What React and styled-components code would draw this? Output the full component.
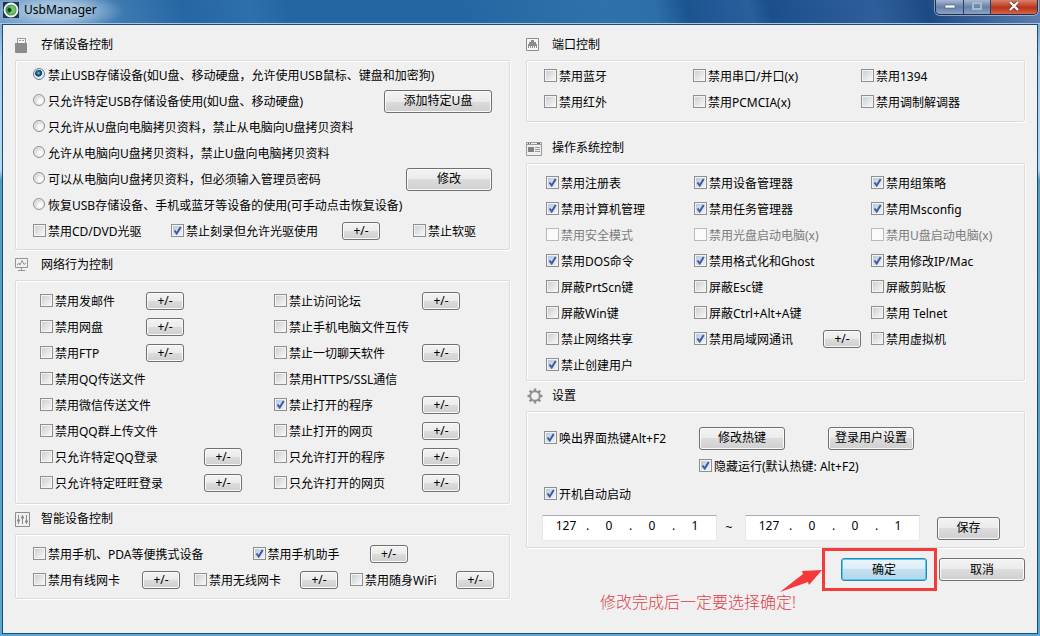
import React from 'react';
import styled, { createGlobalStyle, css } from 'styled-components';

const Global = createGlobalStyle`
  *, *::before, *::after { box-sizing: border-box; }
  body {
    margin: 0;
    font-family: "Noto Sans", "Noto Sans CJK SC", sans-serif;
    font-size: 12px;
    line-height: 16px;
    color: #000;
  }
  button, input { font: inherit; color: inherit; }
`;

const Window = styled.div`
  min-height: 100vh;
  display: flex;
  flex-direction: column;
  background: linear-gradient(180deg, #5f93c4 0, #a9cfe8 60px, #b4d8ee 170px, #4f9fc4 180px, #5aa7cf 100%);
`;

const TitleBar = styled.header`
  height: 24px;
  display: flex;
  align-items: flex-start;
  gap: 5px;
  padding: 0 2px 0 3px;
  border-bottom: 1px solid #a8c4de;
  background:
    radial-gradient(ellipse 68px 20px at 56px 11px, rgba(175, 203, 228, 0.85) 40%, rgba(175, 203, 228, 0) 100%),
    linear-gradient(75deg, #6f9cc6 0, #3d79b0 12%, #2566a3 18%, #2e70ab 24%, #2267a2 28%, #2367a2 44%, #2f72ab 58%, #2d6fa8 63%, #1c5490 66%, #2a5f9c 72%, #1b4f8c 74%, #2f5f9a 84%, #1d4a85 89%, #5f7fae 100%);
`;

const AppIcon = styled.svg`
  width: 16px;
  height: 16px;
  margin-top: 2px;
`;

const WindowTitle = styled.h1`
  margin: 2px 0 0;
  flex: 1;
  font-size: 12px;
  line-height: 16px;
  font-weight: 400;
`;

const Caption = styled.div`
  display: flex;
  height: 15px;
  border: 1px solid #1f2f4c;
  border-top: 0;
  border-radius: 0 0 5px 5px;
  overflow: hidden;
  box-shadow: 0 0 0 1px rgba(200, 215, 235, 0.6);
`;

const CaptionButton = styled.button`
  width: ${p => (p.$close ? 47 : 27)}px;
  padding: 0 0 3px;
  border: 0;
  border-left: ${p => (p.$first ? '0' : '1px solid #2c3f60')};
  background: ${p => (p.$close
    ? 'linear-gradient(#d9806c, #b93318 55%, #d6664b)'
    : 'linear-gradient(#a8b8d2, #6680a8 50%, #8ba2c4)')};
  display: flex;
  align-items: center;
  justify-content: center;
`;

const Body = styled.main`
  flex: 1;
  margin: 0 2px 2px;
  border: 1px solid #1d4a78;
  background: #f0f0f0;
  padding: 5px 12px 7px;
  display: grid;
  grid-template-columns: 495fr 499fr;
  column-gap: 16px;
  align-items: start;
`;

const Section = styled.section`
  margin-top: ${p => p.$space || 0}px;
`;

const SectionHead = styled.h2`
  margin: 0;
  height: 30px;
  display: flex;
  align-items: center;
  gap: 9px;
  font-size: 12px;
  line-height: 16px;
  font-weight: 400;
  svg { width: 17px; height: 17px; }
`;

const Panel = styled.div`
  border: 1px solid #d9dbdc;
  border-radius: 2px;
  box-shadow: inset 1px 1px 0 #fff, 1px 1px 0 #fff;
  padding: ${p => p.$pad};
`;

const Row = styled.div`
  display: flex;
  align-items: center;
  justify-content: ${p => (p.$spread ? 'space-between' : 'flex-start')};
  height: 26px;
`;

const Grid = styled.div`
  display: grid;
  grid-template-columns: ${p => p.$columns};
  grid-auto-rows: ${p => p.$height || 26}px;
  align-items: center;
  padding-left: ${p => p.$indent || 0}px;
`;

const Cell = styled.div`
  display: flex;
  align-items: center;
  grid-column: ${p => p.$column || 'auto'};
`;

const Label = styled.label`
  display: flex;
  align-items: center;
  gap: 2px;
  width: ${p => (p.$width ? `${p.$width}px` : 'auto')};
  padding-top: 1px;
  white-space: nowrap;
  color: ${p => (p.$disabled ? '#7c7c7c' : '#000')};
`;

const CheckInput = styled.input`
  appearance: none;
  flex: none;
  width: 13px;
  height: 13px;
  margin: 0 0 3px;
  border: 1px solid #8e8f8f;
  background: linear-gradient(135deg, #cdd0d3, #f6f6f6) content-box, #f4f4f4;
  padding: 1px;
  &:checked {
    background:
      url("data:image/svg+xml,%3Csvg xmlns='http://www.w3.org/2000/svg' viewBox='0 0 11 11'%3E%3Cpath d='M2.5 5.5L4.7 8.5L8.7 2' fill='none' stroke='%2342599c' stroke-width='2'/%3E%3C/svg%3E") center / 11px 11px no-repeat border-box,
      linear-gradient(135deg, #b5c9e0, #eef4fa) content-box,
      #f4f4f4;
  }
  &:disabled {
    border-color: #b9b9b9;
    background: #fafafa;
  }
`;

const RadioInput = styled.input`
  appearance: none;
  flex: none;
  width: 12px;
  height: 12px;
  margin: 0 1px 3px 0;
  border: 1px solid #8f9092;
  border-radius: 50%;
  background: radial-gradient(circle at 65% 65%, #fbfbfb 20%, #c8cbce 75%);
  box-shadow: inset 0 0 0 1px #f0f0f0;
  &:checked {
    border-color: #5c7f9d;
    background: radial-gradient(circle at 45% 40%, #6fc2e8 0, #14486e 30%, #123d60 40%, #dce7ef 48%);
  }
`;

const buttonFace = css`
  border: 1px solid #707070;
  border-radius: 3px;
  background: linear-gradient(#f3f3f3 0, #ebebeb 50%, #dcdcdc 50%, #cfcfcf 100%);
  box-shadow: inset 0 0 0 1px #fafafa;
`;

const Button = styled.button`
  ${buttonFace}
  width: ${p => p.$width || 86}px;
  height: 23px;
  padding: 0;
  flex: none;
  white-space: nowrap;
  ${p => p.$primary && css`
    border-color: #3c7fb1;
    background: linear-gradient(#eaf4fa 0, #dbedf8 50%, #c5e0f1 50%, #b5d6ea 100%);
    box-shadow: inset 0 0 0 1px #40d0f4;
  `}
`;

const MiniButton = styled.button`
  ${buttonFace}
  width: 38px;
  height: 18px;
  padding: 0;
  line-height: 16px;
  flex: none;
`;

const Address = styled.fieldset`
  flex: none;
  width: 175px;
  height: 26px;
  margin: 0;
  padding: 0 0 4px 4px;
  border: 1px solid #e3e9ef;
  border-top-color: #abadb3;
  background: #fff;
  display: flex;
  align-items: center;
`;

const Octet = styled.input`
  width: 38px;
  padding: 0;
  border: 0;
  background: none;
  text-align: center;
`;

const Dot = styled.span`
  width: 5px;
  text-align: center;
`;

const IpRow = styled.div`
  display: flex;
  align-items: center;
  margin-top: 7px;
`;

const Tilde = styled.span`
  width: 28px;
  padding-right: 4px;
  text-align: center;
`;

const SaveSlot = styled.div`
  margin-left: 17px;
  display: flex;
`;

const Footer = styled.footer`
  display: flex;
  justify-content: flex-end;
  align-items: center;
  gap: 2px;
`;

const Highlight = styled.div`
  position: relative;
  display: flex;
  border: 3px solid #f23b3b;
  padding: 7px 7px 7px 16px;
`;

const Arrow = styled.svg`
  position: absolute;
  right: 111px;
  top: 16px;
  width: 44px;
  height: 26px;
`;

const Note = styled.p`
  position: absolute;
  right: 138px;
  top: 39px;
  margin: 0;
  font-size: 16px;
  line-height: 24px;
  font-weight: 300;
  color: #dc3f48;
  white-space: nowrap;
`;

function Check({ text, checked, disabled, width }) {
  return (
    <Label $width={width} $disabled={disabled}>
      <CheckInput type="checkbox" defaultChecked={checked} disabled={disabled} />
      {text}
    </Label>
  );
}

function Radio({ text, checked }) {
  return (
    <Label>
      <RadioInput type="radio" name="storage" defaultChecked={checked} />
      {text}
    </Label>
  );
}

function More() {
  return <MiniButton type="button">+/-</MiniButton>;
}

function Option({ text, checked, disabled, width, more, column }) {
  return (
    <Cell $column={column}>
      <Check text={text} checked={checked} disabled={disabled} width={width} />
      {more && <More />}
    </Cell>
  );
}

function IpAddress({ label }) {
  return (
    <Address aria-label={label}>
      {['127', '0', '0', '1'].map((part, i) => (
        <React.Fragment key={i}>
          {i > 0 && <Dot>.</Dot>}
          <Octet type="text" defaultValue={part} aria-label={`${label} ${i + 1}`} />
        </React.Fragment>
      ))}
    </Address>
  );
}

const UsbIcon = () => (
  <svg viewBox="0 0 17 17">
    <path d="M2.5 7V1.5h8V7" fill="#f7f7f7" stroke="#999" />
    <path d="M4 3h2v1H4zM7 3h2v1H7z" fill="#999" />
    <path d="M0 6h12v9q0 1-1 1H1q-1 0-1-1z" fill="#8b8b8b" />
  </svg>
);

const MonitorIcon = () => (
  <svg viewBox="0 0 17 17" fill="none" stroke="#949494">
    <path d="M.5 1.500h12v9H.500zM6.500 10.500v3M3 13.500h7" />
    <path d="M2 8l2-2 1 2 2-4.500 2 4 2-1.500" />
  </svg>
);

const SlidersIcon = () => (
  <svg viewBox="0 0 17 17" fill="none" stroke="#8c8c8c">
    <path d="M.5 1.500h14v14H.500zM3.500 4v9M7.500 4v9M11.500 4v9" />
    <path d="M2 9.500h3M6 6.500h3M10 10.500h3" strokeWidth="2" />
  </svg>
);

const PortIcon = () => (
  <svg viewBox="0 0 17 17">
    <path d="M.5 1.500h12v12H.500z" fill="#f7f7f7" stroke="#8c8c8c" />
    <path d="M2 11V7h1V5h2V3h3v2h2v2h1v4h-1v-2H9v2H8v-2H7v2H6v-2H5v2H4v-2H3v2z" fill="#8c8c8c" />
  </svg>
);

const SystemIcon = () => (
  <svg viewBox="0 0 17 17">
    <path d="M.5 2.500h15v13H.500zM.500 4.500h15" fill="none" stroke="#999" />
    <path d="M2 7h6v5H2z" fill="#808080" />
    <path d="M9 7.500h5M9 9.500h5M9 11.500h5" stroke="#999" />
    <path d="M2 3.500h1M4 3.500h1M11 3.500h3" stroke="#666" />
  </svg>
);

const GearIcon = () => (
  <svg viewBox="0 0 17 17" fill="none" stroke="#8f8f8f">
    <circle cx="9" cy="8" r="4.800" strokeWidth="2" />
    <path d="M9 .5v2.500M9 13v2.500M1.500 8H4M14 8h2.500M3.700 2.700l1.800 1.800M12.500 11.500l1.800 1.800M3.700 13.300l1.800-1.800M12.500 4.500l1.800-1.800" strokeWidth="2.400" />
  </svg>
);

const networkRows = [
  [{ text: '禁用发邮件', width: 106, more: true }, { text: '禁止访问论坛', more: true }],
  [{ text: '禁用网盘', width: 106, more: true }, { text: '禁止手机电脑文件互传' }],
  [{ text: '禁用FTP', width: 106, more: true }, { text: '禁止一切聊天软件', more: true }],
  [{ text: '禁用QQ传送文件' }, { text: '禁用HTTPS/SSL通信' }],
  [{ text: '禁用微信传送文件' }, { text: '禁止打开的程序', checked: true, more: true }],
  [{ text: '禁用QQ群上传文件' }, { text: '禁止打开的网页', more: true }],
  [{ text: '只允许特定QQ登录', width: 164, more: true }, { text: '只允许打开的程序', more: true }],
  [{ text: '只允许特定旺旺登录', width: 164, more: true }, { text: '只允许打开的网页', more: true }],
];

const systemOptions = [
  { text: '禁用注册表', checked: true }, { text: '禁用设备管理器', checked: true }, { text: '禁用组策略', checked: true },
  { text: '禁用计算机管理', checked: true }, { text: '禁用任务管理器', checked: true }, { text: '禁用Msconfig', checked: true },
  { text: '禁用安全模式', disabled: true }, { text: '禁用光盘启动电脑(x)', disabled: true }, { text: '禁用U盘启动电脑(x)', disabled: true },
  { text: '禁用DOS命令', checked: true }, { text: '禁用格式化和Ghost', checked: true }, { text: '禁用修改IP/Mac', checked: true },
  { text: '屏蔽PrtScn键' }, { text: '屏蔽Esc键' }, { text: '屏蔽剪贴板' },
  { text: '屏蔽Win键' }, { text: '屏蔽Ctrl+Alt+A键' }, { text: '禁用 Telnet' },
  { text: '禁止网络共享' }, { text: '禁用局域网通讯', checked: true, width: 129, more: true }, { text: '禁用虚拟机' },
  { text: '禁止创建用户', checked: true },
];

export default function App() {
  return (
    <>
      <Global />
      <Window>
        <TitleBar>
          <AppIcon viewBox="0 0 16 16">
            <path d="M0 0h16v16H0z" fill="#1d3557" />
            <circle cx="8" cy="8" r="6.500" fill="#3f9a4a" stroke="#f2f7f2" strokeWidth="1.800" />
            <path d="M6 4a4.500 4.500 0 1 1 0 8 5 5 0 0 0 0-8z" fill="#7cc06e" />
            <circle cx="6.500" cy="8" r="2" fill="#143c22" />
          </AppIcon>
          <WindowTitle>UsbManager</WindowTitle>
          <Caption>
            <CaptionButton type="button" aria-label="最小化" $first>
              <svg width="12" height="6" viewBox="0 0 12 6"><path d="M1 2h10v3H1z" fill="#fff" stroke="#45526b" strokeWidth=".6" /></svg>
            </CaptionButton>
            <CaptionButton type="button" aria-label="最大化">
              <svg width="12" height="10" viewBox="0 0 12 10"><path d="M2 2h8v6H2z" fill="none" stroke="#a9b9d0" strokeWidth="2" /></svg>
            </CaptionButton>
            <CaptionButton type="button" aria-label="关闭" $close>
              <svg width="12" height="10" viewBox="0 0 12 10"><path d="M2 1l8 8M10 1l-8 8" stroke="#5c2a22" strokeWidth="3.600" /><path d="M2 1l8 8M10 1l-8 8" stroke="#fff" strokeWidth="2.400" /></svg>
            </CaptionButton>
          </Caption>
        </TitleBar>
        <Body>
          <div>
            <Section>
              <SectionHead><UsbIcon />存储设备控制</SectionHead>
              <Panel $pad="1px 17px 5px 17px">
                <Row><Radio checked text="禁止USB存储设备(如U盘、移动硬盘，允许使用USB鼠标、键盘和加密狗)" /></Row>
                <Row $spread>
                  <Radio text="只允许特定USB存储设备使用(如U盘、移动硬盘)" />
                  <Button type="button" $width={108}>添加特定U盘</Button>
                </Row>
                <Row><Radio text="只允许从U盘向电脑拷贝资料，禁止从电脑向U盘拷贝资料" /></Row>
                <Row><Radio text="允许从电脑向U盘拷贝资料，禁止U盘向电脑拷贝资料" /></Row>
                <Row $spread>
                  <Radio text="可以从电脑向U盘拷贝资料，但必须输入管理员密码" />
                  <Button type="button">修改</Button>
                </Row>
                <Row><Radio text="恢复USB存储设备、手机或蓝牙等设备的使用(可手动点击恢复设备)" /></Row>
                <Grid $columns="138fr 242fr 79fr">
                  <Option text="禁用CD/DVD光驱" />
                  <Option text="禁止刻录但允许光驱使用" checked width={171} more />
                  <Option text="禁止软驱" />
                </Grid>
              </Panel>
            </Section>
            <Section>
              <SectionHead><MonitorIcon />网络行为控制</SectionHead>
              <Panel $pad="7px 0 7px 24px">
                <Grid $columns="234fr 235fr">
                  {networkRows.flatMap(([left, right]) => [
                    <Option key={left.text} {...left} />,
                    <Option key={right.text} {...right} width={148} />,
                  ])}
                </Grid>
              </Panel>
            </Section>
            <Section>
              <SectionHead><SlidersIcon />智能设备控制</SectionHead>
              <Panel $pad="6px 14px 5px 17px">
                <Grid $columns="220fr 243fr">
                  <Option text="禁用手机、PDA等便携式设备" />
                  <Option text="禁用手机助手" checked width={117} more />
                </Grid>
                <Grid $columns="161fr 156fr 145fr">
                  <Option text="禁用有线网卡" width={109} more />
                  <Option text="禁用无线网卡" width={106} more />
                  <Option text="禁用随身WiFi" width={106} more />
                </Grid>
              </Panel>
            </Section>
          </div>
          <div>
            <Section>
              <SectionHead><PortIcon />端口控制</SectionHead>
              <Panel $pad="2px 0 6px 17px">
                <Grid $columns="149fr 168fr 163fr">
                  <Option text="禁用蓝牙" />
                  <Option text="禁用串口/并口(x)" />
                  <Option text="禁用1394" />
                  <Option text="禁用红外" />
                  <Option text="禁用PCMCIA(x)" />
                  <Option text="禁用调制解调器" />
                </Grid>
              </Panel>
            </Section>
            <Section $space={11}>
              <SectionHead><SystemIcon />操作系统控制</SectionHead>
              <Panel $pad="6px 0 2px 19px">
                <Grid $columns="148fr 177fr 153fr">
                  {systemOptions.map(o => <Option key={o.text} {...o} />)}
                </Grid>
              </Panel>
            </Section>
            <Section>
              <SectionHead><GearIcon />设置</SectionHead>
              <Panel $pad="12px 0 6px 15px">
                <Grid $columns="155fr 129fr 196fr" $height={28} $indent={2}>
                  <Option text="唤出界面热键Alt+F2" checked />
                  <Cell><Button type="button">修改热键</Button></Cell>
                  <Cell><Button type="button">登录用户设置</Button></Cell>
                  <Option text="隐藏运行(默认热键: Alt+F2)" checked column="2 / 4" />
                  <Option text="开机自动启动" checked column="1 / 4" />
                </Grid>
                <IpRow>
                  <IpAddress label="起始IP" />
                  <Tilde>~</Tilde>
                  <IpAddress label="结束IP" />
                  <SaveSlot><Button type="button" $width={63}>保存</Button></SaveSlot>
                </IpRow>
              </Panel>
            </Section>
            <Footer>
              <Highlight>
                <Button type="button" $primary>确定</Button>
                <Arrow viewBox="0 0 44 26" aria-hidden="true">
                  <path d="M1 25L24 7 23 4 43 3 30 18 29 15z" fill="#f5383a" />
                </Arrow>
                <Note>修改完成后一定要选择确定!</Note>
              </Highlight>
              <Button type="button">取消</Button>
            </Footer>
          </div>
        </Body>
      </Window>
    </>
  );
}
